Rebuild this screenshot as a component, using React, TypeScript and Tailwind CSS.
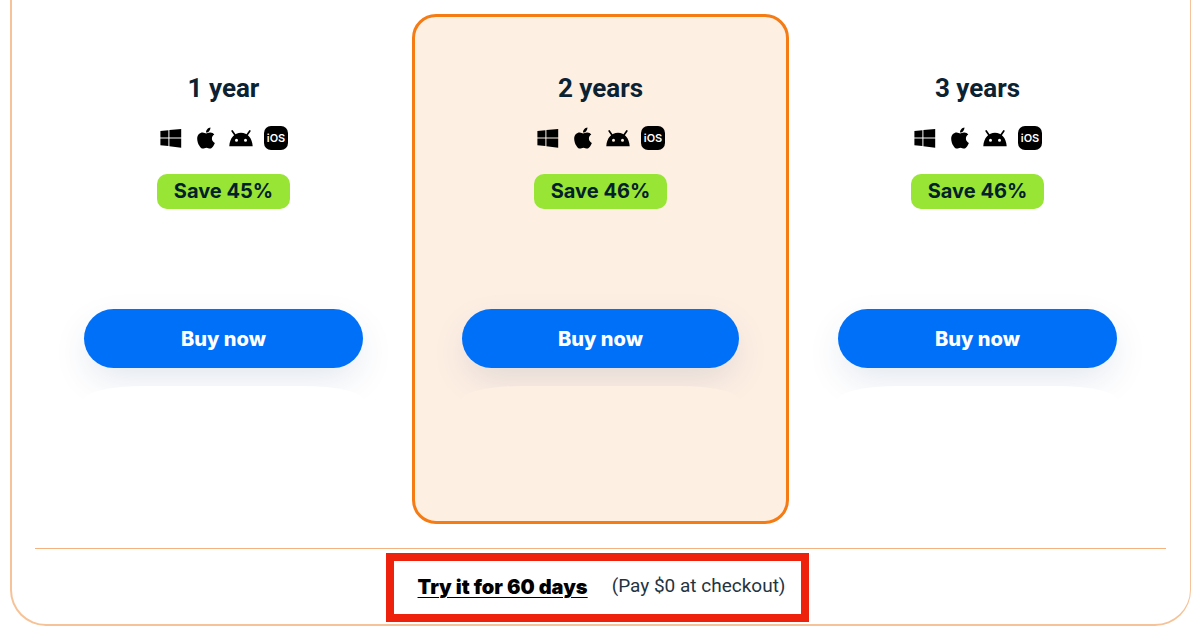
import clsx from "clsx";
import { FaApple } from "react-icons/fa";

type Plan = {
  title: string;
  save: string;
  featured?: boolean;
};

const plans: Plan[] = [
  { title: "1 year", save: "Save 45%" },
  { title: "2 years", save: "Save 46%", featured: true },
  { title: "3 years", save: "Save 46%" },
];

function WindowsIcon() {
  return (
    <svg viewBox="0 0 24 24" className="size-6" fill="currentColor" aria-hidden="true">
      <path d="M1.4 5 9.400 4.200v7.400h-8zM10.400 4.100 22.200 2.900v8.700H10.400zM1.400 12.600h8v7.500l-8-.8zM10.400 12.600h11.800v9.200l-11.800-1.500z" />
    </svg>
  );
}

function AndroidIcon() {
  return (
    <svg viewBox="0 0 24 24" className="size-6" aria-hidden="true">
      <path
        d="M3.200 5 6 9M20.800 5 18 9"
        stroke="currentColor"
        strokeWidth="1.700"
        strokeLinecap="round"
      />
      <path
        fill="currentColor"
        fillRule="evenodd"
        d="M.3 20.300C.8 12 5.500 6.800 12 6.800s11.200 5.200 11.700 13.500zM7.500 12.700a1.500 1.500 0 1 0 0 3 1.500 1.500 0 0 0 0-3zm9 0a1.500 1.500 0 1 0 0 3 1.500 1.500 0 0 0 0-3z"
      />
    </svg>
  );
}

function Platforms() {
  return (
    <div className="flex items-center gap-[11px] text-black">
      <WindowsIcon />
      <FaApple className="size-6" aria-hidden="true" />
      <AndroidIcon />
      <span className="flex size-6 items-center justify-center rounded-[7px] bg-black text-[11px] leading-none font-semibold text-white">
        iOS
      </span>
    </div>
  );
}

function PlanColumn({ plan }: { plan: Plan }) {
  return (
    <div
      className={clsx(
        "flex h-[510px] flex-col items-center",
        plan.featured
          ? "rounded-3xl border-3 border-[#f57c14] bg-[#feefe3] px-[47px] pt-[55px]"
          : "bg-white px-[49px] pt-[58px]"
      )}
    >
      <h2 className="font-[Roboto] text-[26px] leading-8 font-bold text-[#0b2232]">{plan.title}</h2>
      <div className="mt-[22px]">
        <Platforms />
      </div>
      <p className="mt-6 rounded-[10px] bg-[#98e535] px-[17px] text-[20px] leading-[35px] font-bold text-[#04202b]">
        {plan.save}
      </p>
      <button
        type="button"
        className="mt-[100px] h-[59px] w-full cursor-pointer rounded-full bg-[#0070f8] text-[20px] font-extrabold text-white shadow-[0_14px_36px_-4px_rgba(20,60,120,0.13)]"
      >
        Buy now
      </button>
      {/* cuts the button shadow off with a soft curve */}
      <div className="relative mt-[18px] h-10 w-full rounded-t-[60px_14px] bg-inherit" />
    </div>
  );
}

export default function App() {
  return (
    <div className="bg-white pr-[9px] pb-[13px] pl-[10px] font-[Inter,sans-serif]">
      <section className="rounded-b-[36px] border-2 border-t-0 border-r border-[#f6c297] pt-[14px] pr-6 pb-0.5 pl-[23px]">
        <div className="grid grid-cols-3">
          {plans.map((plan) => (
            <PlanColumn key={plan.title} plan={plan} />
          ))}
        </div>

        <hr className="mt-6 border-[#f4b281]" />

        <div className="mt-1 flex justify-center pr-1.5">
          <div className="flex h-[69px] items-center gap-6 border-8 border-[#ee220c] pr-4 pb-0.5 pl-6">
            <a href="#trial" className="text-[20px] font-black text-black underline decoration-1 underline-offset-3">
              Try it for 60 days
            </a>
            <span className="font-[Roboto] text-[19px] text-[#1f3442]">(Pay $0 at checkout)</span>
          </div>
        </div>
      </section>
    </div>
  );
}
